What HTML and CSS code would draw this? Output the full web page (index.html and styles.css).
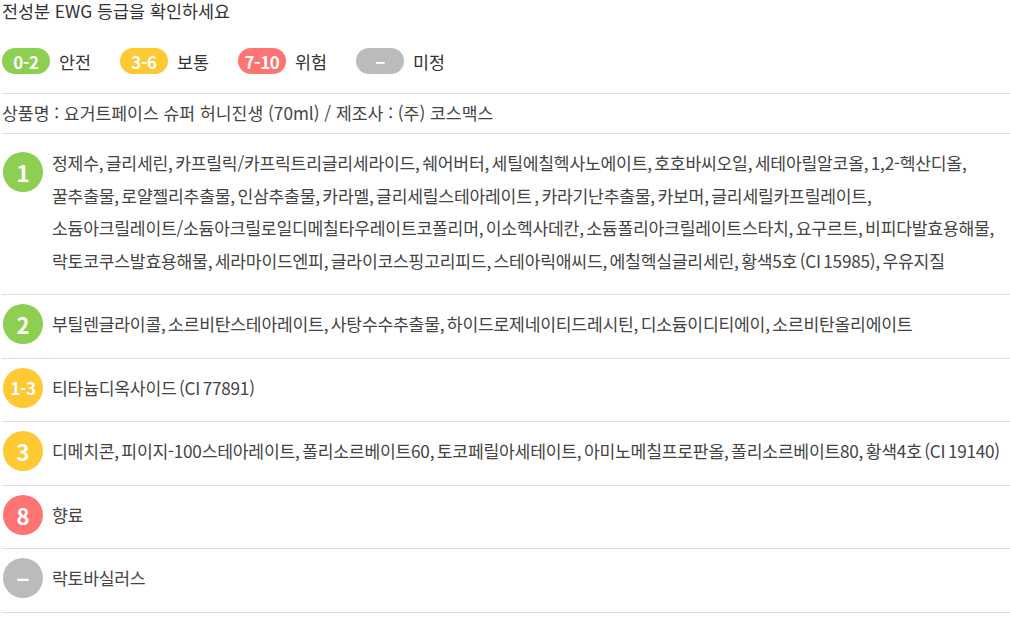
FILE: index.html
```html
<!DOCTYPE html>
<html lang="ko">
<head>
<meta charset="utf-8">
<title>전성분 EWG 등급</title>
<link rel="stylesheet" href="styles.css">
</head>
<body>
<div class="ewg">
  <h2 class="title">전성분 EWG 등급을 확인하세요</h2>
  <ul class="legend">
    <li class="legend-item"><span class="pill green">0-2</span><span class="legend-label">안전</span></li>
    <li class="legend-item"><span class="pill yellow">3-6</span><span class="legend-label">보통</span></li>
    <li class="legend-item"><span class="pill red">7-10</span><span class="legend-label">위험</span></li>
    <li class="legend-item"><span class="pill gray">−</span><span class="legend-label">미정</span></li>
  </ul>
  <p class="product">상품명 : 요거트페이스 슈퍼 허니진생 (70ml) / 제조사 : (주) 코스맥스</p>
  <ul class="grades">
    <li class="grade-row multi">
      <span class="badge green">1</span>
      <p class="ingredients">정제수, 글리세린, 카프릴릭/카프릭트리글리세라이드, 쉐어버터, 세틸에칠헥사노에이트, 호호바씨오일, 세테아릴알코올, 1,2-헥산디올,<br>꿀추출물, 로얄젤리추출물, 인삼추출물, 카라멜, 글리세릴스테아레이트 , 카라기난추출물, 카보머, 글리세릴카프릴레이트,<br>소듐아크릴레이트/소듐아크릴로일디메칠타우레이트코폴리머, 이소헥사데칸, 소듐폴리아크릴레이트스타치, 요구르트, 비피다발효용해물,<br>락토코쿠스발효용해물, 세라마이드엔피, 글라이코스핑고리피드, 스테아릭애씨드, 에칠헥실글리세린, 황색5호 (CI 15985), 우유지질</p>
    </li>
    <li class="grade-row">
      <span class="badge green">2</span>
      <p class="ingredients">부틸렌글라이콜, 소르비탄스테아레이트, 사탕수수추출물, 하이드로제네이티드레시틴, 디소듐이디티에이, 소르비탄올리에이트</p>
    </li>
    <li class="grade-row">
      <span class="badge yellow small">1-3</span>
      <p class="ingredients">티타늄디옥사이드 (CI 77891)</p>
    </li>
    <li class="grade-row">
      <span class="badge yellow">3</span>
      <p class="ingredients">디메치콘, 피이지-100스테아레이트, 폴리소르베이트60, 토코페릴아세테이트, 아미노메칠프로판올, 폴리소르베이트80, 황색4호 (CI 19140)</p>
    </li>
    <li class="grade-row">
      <span class="badge red">8</span>
      <p class="ingredients">향료</p>
    </li>
    <li class="grade-row">
      <span class="badge gray">−</span>
      <p class="ingredients">락토바실러스</p>
    </li>
  </ul>
</div>
</body>
</html>
```
FILE: styles.css
```css
* { box-sizing: border-box; }
html, body { margin: 0; padding: 0; background: #fff; }
body {
  font-family: "Noto Sans CJK KR", "Noto Sans", sans-serif;
  color: #444;
}
.ewg { padding: 0 0 0 2px; width: 1010px; }
.title {
  margin: 0;
  font-size: 17.4px;
  font-weight: 400;
  line-height: 22px;
  color: #333;
}
.legend {
  list-style: none;
  margin: 0;
  padding: 26px 0 19px;
  display: flex;
  border-bottom: 1px solid #ddd;
}
.legend-item {
  width: 118px;
  display: flex;
  align-items: center;
  gap: 9px;
}
.pill {
  width: 48px;
  height: 26px;
  border-radius: 13px;
  color: #fff;
  font-weight: 700;
  font-size: 17px;
  display: flex;
  align-items: center;
  justify-content: center;
  letter-spacing: -0.3px;
}
.legend-label { font-size: 17.4px; color: #333; }
.green { background: #8dcf50; }
.yellow { background: #ffc933; }
.red { background: #ff7373; }
.gray { background: #bbbbbb; }
.product {
  margin: 0;
  padding: 0;
  height: 40px;
  line-height: 38px;
  font-size: 17.2px;
  border-bottom: 1px solid #ddd;
  color: #444;
}
.grades { list-style: none; margin: 0; padding: 0; }
.grade-row {
  display: flex;
  align-items: center;
  gap: 9px;
  padding: 13px 0 17px;
  border-bottom: 1px solid #ddd;
}
.grade-row.multi { align-items: flex-start; }
.badge {
  flex: 0 0 40px;
  width: 40px;
  height: 40px;
  border-radius: 50%;
  color: #fff;
  font-weight: 700;
  font-size: 22px;
  display: flex;
  align-items: center;
  justify-content: center;
  margin: -4px 0 -4px 1px;
}
.multi .badge { margin-top: 5px; }
.badge.small { font-size: 17px; letter-spacing: -0.5px; }
.ingredients {
  margin: 0;
  font-size: 17.2px;
  line-height: 32.5px;
  color: #444;
  letter-spacing: -0.25px;
  word-spacing: -2px;
  word-break: keep-all;
}
```
